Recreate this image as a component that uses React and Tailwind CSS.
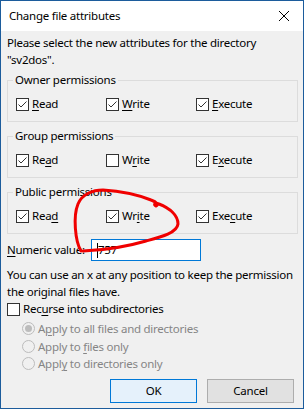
import React from "react";

const font = { fontFamily: '"Noto Sans", "Open Sans", sans-serif', letterSpacing: "-0.25px" };

function Check({ checked }) {
  return (
    <span className="inline-flex w-[13px] h-[13px] border border-[#333333] bg-white items-center justify-center shrink-0">
      {checked && (
        <svg width="11" height="11" viewBox="0 0 11 11">
          <path d="M1.5 5.5 L4 8 L9.5 2.5" fill="none" stroke="#333333" strokeWidth="1" />
        </svg>
      )}
    </span>
  );
}

function CB({ checked, pre, u, post }) {
  return (
    <div className="flex items-center h-[16px]">
      <Check checked={checked} />
      <span className="ml-[3px] leading-[16px] whitespace-nowrap">
        {pre}
        <u className="underline-offset-2">{u}</u>
        {post}
      </span>
    </div>
  );
}

function Group({ title, items }) {
  return (
    <fieldset className="w-[291px] border border-[#dcdcdc] pl-[8px] pt-[8px] pb-[9px]">
      <legend className="px-[2px] -ml-[3px] leading-[16px]">{title}</legend>
      <div className="grid grid-cols-[90px_90px_90px]">
        {items.map((it, i) => (
          <CB key={i} {...it} />
        ))}
      </div>
    </fieldset>
  );
}

function Radio({ selected, pre, u, post }) {
  return (
    <div className="flex items-center h-[17.5px] pl-[15px] text-[#858585]">
      <span className="w-[13px] h-[13px] rounded-full border border-[#bcbcbc] bg-[#f0f0f0] flex items-center justify-center">
        {selected && <span className="w-[7px] h-[7px] rounded-full bg-[#bcbcbc]" />}
      </span>
      <span className="ml-[3px] whitespace-nowrap">
        {pre}
        <u className="underline-offset-2">{u}</u>
        {post}
      </span>
    </div>
  );
}

export default function App() {
  return (
    <div
      className="relative w-[304px] h-[409px] border border-[#1c5c9c] bg-[#f0f0f0] text-[11.5px] text-black flex flex-col overflow-hidden"
      style={font}
    >
      <div className="h-[30px] bg-white flex items-center justify-between pl-[8px] pr-[14px] shrink-0">
        <span>Change file attributes</span>
        <svg width="10" height="10" viewBox="0 0 10 10">
          <path d="M0 0 L10 10 M10 0 L0 10" stroke="#000" strokeWidth="1" />
        </svg>
      </div>
      <div className="flex flex-col pl-[6px] pt-[3px]">
        <div className="leading-[17px] whitespace-nowrap">
          Please select the new attributes for the directory
          <br />
          "sv2dos".
        </div>
        <div className="mt-[4px] flex flex-col gap-[6px]">
          <Group
            title="Owner permissions"
            items={[
              { checked: true, pre: "", u: "R", post: "ead" },
              { checked: true, pre: "", u: "W", post: "rite" },
              { checked: true, pre: "", u: "E", post: "xecute" },
            ]}
          />
          <Group
            title="Group permissions"
            items={[
              { checked: true, pre: "Re", u: "a", post: "d" },
              { checked: false, pre: "W", u: "r", post: "ite" },
              { checked: true, pre: "E", u: "x", post: "ecute" },
            ]}
          />
          <Group
            title="Public permissions"
            items={[
              { checked: true, pre: "Rea", u: "d", post: "" },
              { checked: true, pre: "Wr", u: "i", post: "te" },
              { checked: true, pre: "Exe", u: "c", post: "ute" },
            ]}
          />
        </div>
        <div className="flex items-center mt-[5px] h-[22px]">
          <span className="w-[84px] whitespace-nowrap">
            <u className="underline-offset-2">N</u>umeric value:
          </span>
          <div className="w-[110px] h-[22px] border border-[#0078d7] bg-white flex items-center pl-[5px]">
            <span className="w-px h-[15px] bg-black" />
            <span>757</span>
          </div>
        </div>
        <div className="leading-[17px] mt-[5px] whitespace-nowrap">
          You can use an x at any position to keep the permission
          <br />
          the original files have.
        </div>
        <div className="flex items-center h-[16px] mt-[1px]">
          <Check checked={false} />
          <span className="ml-[3px] whitespace-nowrap">
            Rec<u className="underline-offset-2">u</u>rse into subdirectories
          </span>
        </div>
        <div className="flex flex-col mt-[3px]">
          <Radio selected pre="A" u="p" post="ply to all files and directories" />
          <Radio pre="Apply to " u="f" post="iles only" />
          <Radio pre="Appl" u="y" post=" to directories only" />
        </div>
        <div className="flex justify-end gap-[10px] pr-[9px] mt-[6px]">
          <button className="w-[87px] h-[24px] border border-[#0078d7] bg-[#e5f1fb]">OK</button>
          <button className="w-[87px] h-[24px] border border-[#adadad] bg-[#e1e1e1]">Cancel</button>
        </div>
      </div>
      <svg className="absolute inset-0 pointer-events-none" width="304" height="409" viewBox="0 0 304 409">
        <path
          d="M80 250 C74 240, 72 215, 77 203 C81 193, 92 189, 102 189 C118 190, 135 193, 150 199 C156 201, 158 204, 155 205 C152 204, 154 201, 158 203 C168 207, 177 214, 177 223 C176 232, 160 236, 145 240 C128 245, 110 249, 82 250"
          fill="none"
          stroke="#f00000"
          strokeWidth="3"
          strokeLinecap="round"
          strokeLinejoin="round"
        />
      </svg>
    </div>
  );
}
